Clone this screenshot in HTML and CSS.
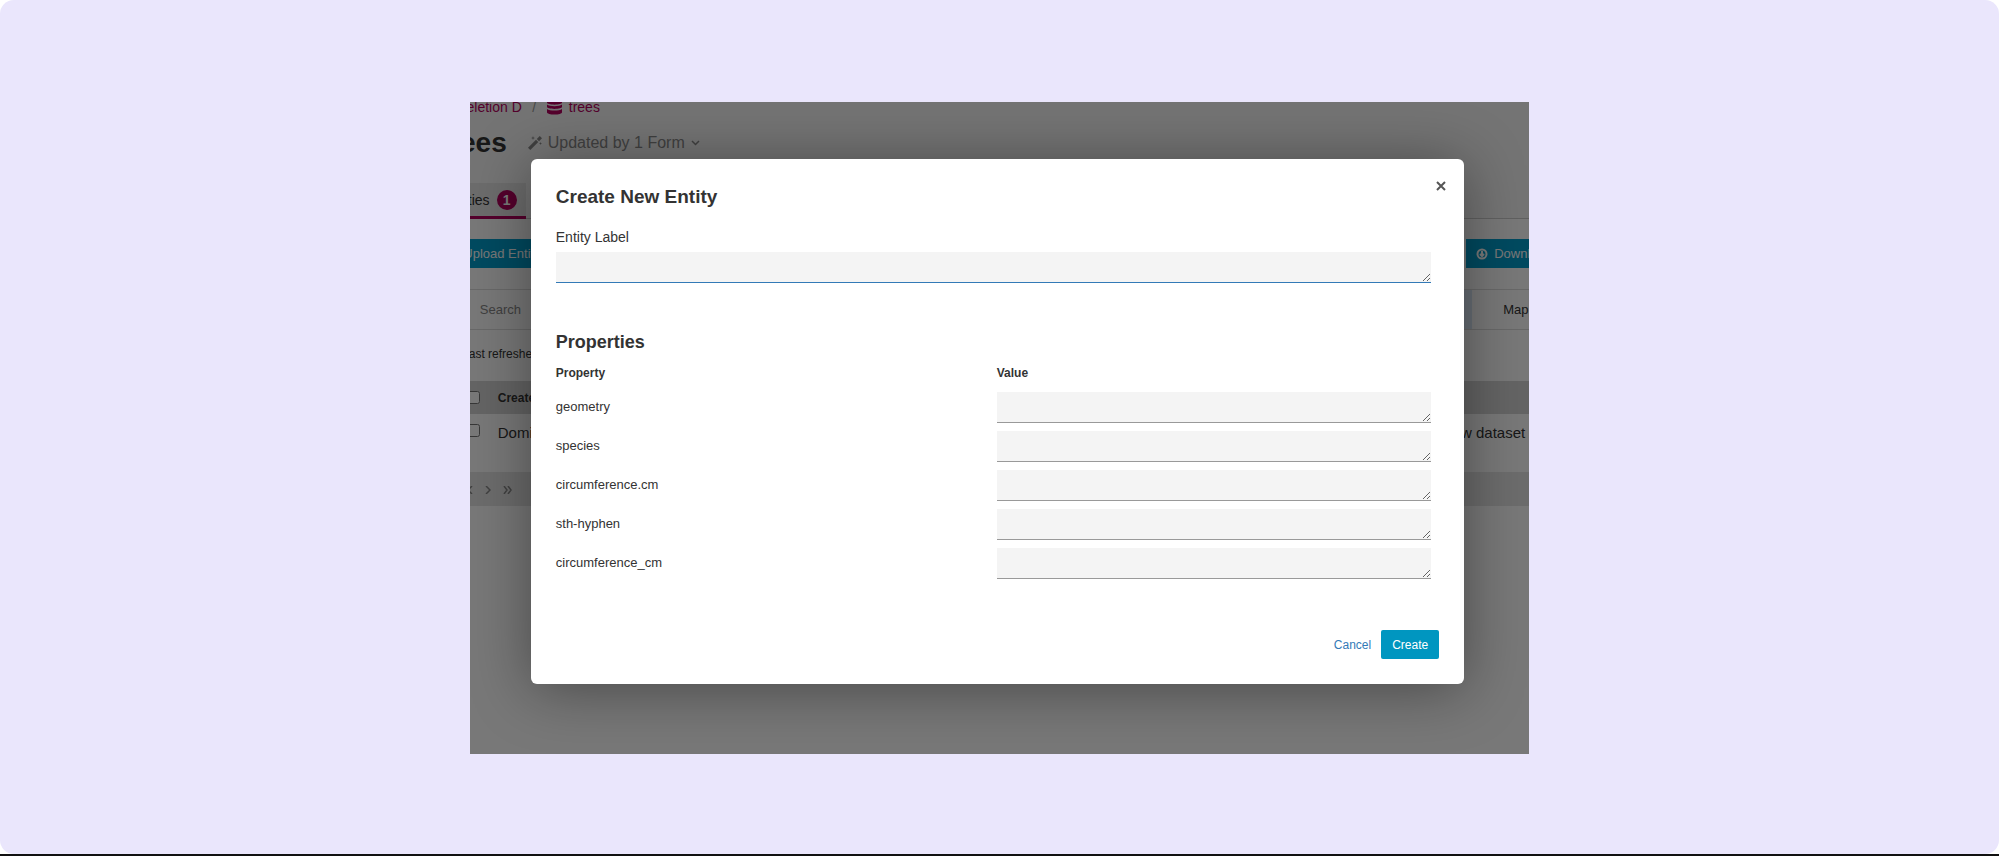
FILE: index.html
```html
<!DOCTYPE html>
<html lang="en">
<head>
  <meta charset="UTF-8">
  <meta name="viewport" content="width=device-width, initial-scale=1.0">
  <title>Create New Entity</title>
  <link rel="stylesheet" href="styles.css">
</head>
<body>
  <div class="stage">
    <div class="window">
      <div class="page">
        <header class="page-head">
          <nav class="breadcrumbs">
            <a href="#" class="cut crumb-parent">eletion D</a>
            <span class="slash">/</span>
            <a href="#" class="crumb">
              <svg width="15" height="16" viewBox="0 0 16 16" fill="currentColor">
                <path d="M0 2.500C0 1.100 3.600 0 8 0s8 1.100 8 2.500v.7C16 4.600 12.400 5.500 8 5.500S0 4.600 0 3.200z"/>
                <path d="M0 5.400C1.500 6.600 4.500 7.100 8 7.100s6.500-.5 8-1.700v2.300c0 1.400-3.600 2.300-8 2.300S0 9.100 0 7.700z"/>
                <path d="M0 10c1.500 1.200 4.500 1.700 8 1.700s6.500-.5 8-1.700v3.500c0 1.400-3.600 2.500-8 2.500s-8-1.100-8-2.500z"/>
              </svg>
              trees
            </a>
          </nav>
          <div class="title-row">
            <h1 class="cut">ees</h1>
            <button type="button" class="updated">
              <svg width="14" height="14" viewBox="0 0 14 14" fill="currentColor">
                <path d="M0 11.700 8 3.700 10.300 6l-8 8z"/>
                <path d="M8.800 2.900 11.700 0 14 2.300l-2.900 2.900z"/>
                <path d="M5 0l.5 1.500L7 2l-1.500.5L5 4l-.5-1.500L3 2l1.500-.5zM12.500 6l.4 1.100 1.100.4-1.100.4-.4 1.100-.4-1.100-1.100-.4 1.100-.4z"/>
              </svg>
              Updated by 1 Form
              <svg width="9" height="6" viewBox="0 0 9 6" fill="none" stroke="currentColor" stroke-width="1.500"><path d="M1 1l3.500 3.500L8 1"/></svg>
            </button>
          </div>
          <div class="tabs">
            <a href="#" class="tab"><span>ties</span><span class="badge">1</span></a>
          </div>
        </header>
        <main class="page-body">
          <div class="actions">
            <button type="button" class="action"><span class="cut upload">Upload Entities</span></button>
            <button type="button" class="action download">
              <svg width="12" height="12" viewBox="0 0 12 12" fill="none" stroke="currentColor" stroke-width="2"><circle cx="6" cy="6" r="4.500"/><path d="M6 3v5M4 6l2 2 2-2"/></svg>
              Download
            </button>
          </div>
          <div class="filters">
            <input type="search" class="search" placeholder="Search" aria-label="Search">
            <div class="view-switch"><button type="button">Map</button></div>
          </div>
          <p class="refreshed">ast refreshed</p>
          <table class="entities">
            <thead>
              <tr><th class="check"><input type="checkbox" aria-label="Select all"></th><th>Created by</th><th></th></tr>
            </thead>
            <tbody>
              <tr><td class="check"><input type="checkbox" aria-label="Select row"></td><td>Dominic</td><td class="last">w dataset</td></tr>
            </tbody>
          </table>
          <div class="pagination">
            <button type="button" aria-label="Previous">
              <svg width="3" height="8" viewBox="3 0 3 8" fill="none" stroke="currentColor" stroke-width="1.500"><path d="M5 0L1 4l4 4"/></svg>
            </button>
            <button type="button" aria-label="Next">
              <svg width="6" height="8" viewBox="0 0 6 8" fill="none" stroke="currentColor" stroke-width="1.500"><path d="M1 0l4 4-4 4"/></svg>
            </button>
            <button type="button" aria-label="Last">
              <svg width="9" height="8" viewBox="0 0 9 8" fill="none" stroke="currentColor" stroke-width="1.500"><path d="M1 0l3 4-3 4M5 0l3 4-3 4"/></svg>
            </button>
          </div>
        </main>
      </div>

      <div class="backdrop">
        <form class="modal" role="dialog" aria-labelledby="modal-title">
          <div class="modal-head">
            <h2 id="modal-title">Create New Entity</h2>
            <button type="button" class="close" aria-label="Close">
              <svg width="10" height="10" viewBox="0 0 10 10" stroke="currentColor" stroke-width="2"><path d="M1 1l8 8M9 1L1 9"/></svg>
            </button>
          </div>
          <div class="modal-body">
            <label class="entity-label" for="entity-label">Entity Label</label>
            <div class="field active"><textarea id="entity-label" rows="1"></textarea></div>

            <h3>Properties</h3>
            <table class="properties">
              <thead>
                <tr><th>Property</th><th>Value</th></tr>
              </thead>
              <tbody>
                <tr>
                  <td><label for="geometry">geometry</label></td>
                  <td><div class="field"><textarea id="geometry" rows="1"></textarea></div></td>
                </tr>
                <tr>
                  <td><label for="species">species</label></td>
                  <td><div class="field"><textarea id="species" rows="1"></textarea></div></td>
                </tr>
                <tr>
                  <td><label for="circumference-dot">circumference.cm</label></td>
                  <td><div class="field"><textarea id="circumference-dot" rows="1"></textarea></div></td>
                </tr>
                <tr>
                  <td><label for="sth-hyphen">sth-hyphen</label></td>
                  <td><div class="field"><textarea id="sth-hyphen" rows="1"></textarea></div></td>
                </tr>
                <tr>
                  <td><label for="circumference">circumference_cm</label></td>
                  <td><div class="field"><textarea id="circumference" rows="1"></textarea></div></td>
                </tr>
              </tbody>
            </table>
          </div>
          <div class="modal-actions">
            <button type="button" class="cancel">Cancel</button>
            <button type="submit" class="create">Create</button>
          </div>
        </form>
      </div>
    </div>
  </div>
</body>
</html>
```
FILE: styles.css
```css
* {
  box-sizing: border-box;
}
body {
  margin: 0;
  border-bottom: 2px solid #111;
  background: #fff;
  font-family: "Liberation Sans", Arial, sans-serif;
  color: #333;
}
button,
input,
textarea {
  font: inherit;
  color: inherit;
}
button {
  border: none;
  background: none;
  padding: 0;
}
h1, h2, h3, p {
  margin: 0;
}
svg {
  flex: none;
}
.stage {
  min-height: calc(100vh - 2px);
  padding: 102px 0 100px;
  background: #eae6fc;
  border-radius: 14px;
}
.window {
  position: relative;
  width: 53%;
  margin: 0 auto;
  overflow: hidden;
  background: #fff;
}

/* page behind the dialog */
.page {
  position: absolute;
  inset: 0;
  white-space: nowrap;
}
.cut {
  display: flex;
  justify-content: flex-end;
}
.page-head {
  display: flow-root;
  height: 117px;
  background: #f7f7f7;
  border-bottom: 1px solid #ccc;
}
.breadcrumbs {
  display: flex;
  align-items: center;
  height: 18px;
  margin-top: -4px;
  font-size: 14px;
  color: #999;
}
.breadcrumbs a {
  color: #b3005e;
  text-decoration: none;
}
.crumb-parent {
  width: 52px;
}
.slash {
  width: 25px;
  text-align: center;
}
.crumb {
  display: flex;
  align-items: center;
  gap: 7px;
}
.title-row {
  display: flex;
  align-items: center;
  gap: 21px;
  padding-top: 9px;
  height: 44px;
}
.title-row h1 {
  width: 37px;
  font-size: 28px;
  line-height: 32px;
}
.updated {
  display: flex;
  align-items: center;
  gap: 6px;
  font-size: 16px;
  color: #888;
}
.tabs {
  display: flex;
  padding-top: 23px;
}
.tab {
  display: flex;
  align-items: center;
  gap: 7px;
  width: 56px;
  height: 36px;
  border-bottom: 3px solid #b3005e;
  background: #e6e6e6;
  font-size: 14px;
  color: #333;
  text-decoration: none;
}
.tab span:first-child {
  margin-left: -2px;
}
.badge {
  width: 20px;
  height: 20px;
  border-radius: 50%;
  background: #b3005e;
  color: #fff;
  font-weight: bold;
  line-height: 20px;
  text-align: center;
}
.page-body {
  padding-top: 20px;
}
.actions {
  display: flex;
  justify-content: space-between;
  height: 29px;
}
.action {
  display: flex;
  align-items: center;
  gap: 6px;
  background: #009ecc;
  color: #fff;
  font-size: 13px;
}
.upload {
  width: 81px;
}
.download {
  width: 63px;
  padding-left: 10px;
}
.filters {
  display: flex;
  justify-content: space-between;
  height: 41px;
  margin-top: 21px;
  border: solid #ddd;
  border-width: 1px 0;
}
.search {
  flex: 1;
  border: none;
  padding: 0 10px;
  background: none;
  font-size: 13px;
}
.search::placeholder {
  color: #888;
}
.view-switch {
  width: 65px;
  border-left: 8px solid #dbe9f8;
  padding-left: 31px;
  overflow: hidden;
  font-size: 13px;
}
.view-switch button {
  height: 100%;
}
.refreshed {
  margin-left: -1px;
  padding: 16px 0 18px;
  font-size: 12px;
  line-height: 17px;
}
.entities {
  width: 100%;
  border-collapse: collapse;
  font-size: 15px;
}
.entities th {
  height: 33px;
  padding: 0;
  background: #d5d5d5;
  font-size: 12px;
  text-align: left;
}
.entities td {
  height: 58px;
  padding: 10px 0 0;
  vertical-align: top;
}
.entities .check {
  width: 28px;
}
.check input {
  display: block;
  width: 13px;
  height: 13px;
  margin: 0 0 0 -3px;
}
.entities .last {
  padding-right: 4px;
  text-align: right;
}
.pagination {
  display: flex;
  align-items: center;
  gap: 12px;
  height: 34px;
  background: #e6e6e6;
  color: #888;
}

/* dialog */
.backdrop {
  position: relative;
  padding: 57px 65px 70px 61px;
  background: rgba(0, 0, 0, 0.53);
}
.modal {
  display: block;
  padding: 24px 25px 25px;
  border-radius: 6px;
  background: #fff;
  box-shadow: 0 5px 60px rgba(0, 0, 0, 0.4);
}
.modal-head {
  display: flex;
  justify-content: space-between;
  align-items: flex-start;
}
.modal-head h2 {
  padding-top: 2px;
  font-size: 19px;
  line-height: 24px;
}
.close {
  margin-top: -2px;
  margin-right: -7px;
  color: #555;
}
.close svg {
  display: block;
}
.modal-head .close {
  margin-right: -7px;
}
.modal-body {
  padding: 19px 8px 0 0;
}
.entity-label {
  display: block;
  margin-bottom: 6px;
  font-size: 14px;
  line-height: 18px;
}
.field {
  border-bottom: 1px solid #999;
  background: #f4f4f4;
}
.field.active {
  border-color: #337ab7;
}
.field textarea {
  display: block;
  width: 100%;
  height: 30px;
  min-height: 30px;
  padding: 6px 10px;
  border: none;
  outline: none;
  background: none;
  font-size: 13px;
  resize: vertical;
}
.modal-body h3 {
  margin-top: 47px;
  font-size: 18px;
  line-height: 24px;
}
.properties {
  width: 100%;
  table-layout: fixed;
  border-collapse: collapse;
  font-size: 13px;
}
.properties th {
  height: 34px;
  padding: 3px 0 0;
  font-size: 12px;
  text-align: left;
}
.properties td {
  padding: 4px 0;
}
.properties td:first-child {
  padding-bottom: 7px;
}
.properties th:first-child {
  width: 441px;
}
.modal-actions {
  display: flex;
  justify-content: flex-end;
  gap: 10px;
  margin-top: 47px;
  font-size: 12px;
}
.cancel {
  color: #337ab7;
}
.create {
  height: 29px;
  padding: 0 11px;
  border-radius: 2px;
  background: #0096c0;
  color: #fff;
}
```
